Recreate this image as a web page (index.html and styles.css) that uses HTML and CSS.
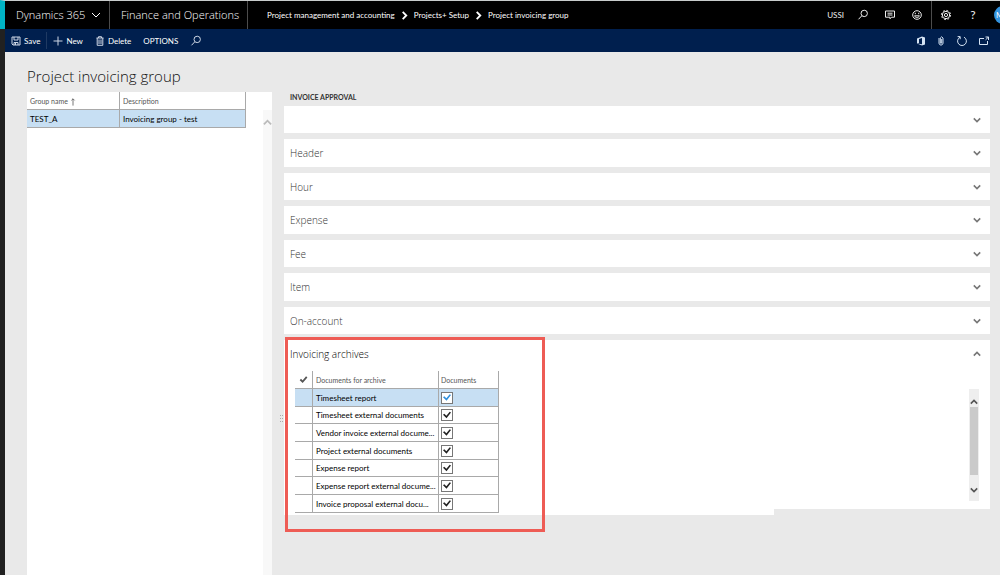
FILE: index.html
```html
<!DOCTYPE html>
<html lang="en">
<head>
<meta charset="utf-8">
<title>Project invoicing group</title>
<link rel="stylesheet" href="styles.css">
</head>
<body>
<svg class="sprite" aria-hidden="true">
  <symbol id="down" viewBox="0 0 10 10"><path d="M1 3l4 4 4-4"/></symbol>
  <symbol id="up" viewBox="0 0 10 10"><path d="M1 7l4-4 4 4"/></symbol>
  <symbol id="right" viewBox="0 0 10 10"><path d="M3 1l4 4-4 4"/></symbol>
  <symbol id="search" viewBox="0 0 12 12"><circle cx="7.2" cy="4.4" r="3.2"/><path d="M4.8 6.8L1.5 10.3"/></symbol>
  <symbol id="tick" viewBox="0 0 10 10"><path d="M1.5 5l2.500 2.500L8.600 2"/></symbol>
</svg>
<div class="app">
  <header class="topbar">
    <button class="brand">Dynamics 365 <svg class="icon i10"><use href="#down"/></svg></button>
    <div class="product">Finance and Operations</div>
    <nav class="crumbs">
      <a href="#">Project management and accounting</a>
      <svg class="icon i9"><use href="#right"/></svg>
      <a href="#">Projects+ Setup</a>
      <svg class="icon i9"><use href="#right"/></svg>
      <a href="#">Project invoicing group</a>
    </nav>
    <div class="top-tools">
      <button class="company">USSI</button>
      <button class="tool" aria-label="Search"><svg class="icon i12"><use href="#search"/></svg></button>
      <button class="tool" aria-label="Messages"><svg class="icon i12" viewBox="0 0 12 12"><path d="M1.5 2h9v6.200h-3L6 9.800V8.200H1.500z"/><path d="M3.500 4.200h5M3.500 6h5"/></svg></button>
      <button class="tool" aria-label="Feedback"><svg class="icon i12" viewBox="0 0 12 12"><circle cx="6" cy="6" r="4.300"/><path d="M3.500 6.800c.8 2.200 4.200 2.200 5 0zM4.300 3.800v1.400M7.700 3.800v1.400"/></svg></button>
    </div>
    <div class="user-tools">
      <button class="tool" aria-label="Settings"><svg class="icon i12" viewBox="0 0 12 12"><circle cx="6" cy="6" r="1.600"/><circle cx="6" cy="6" r="3.700"/><circle cx="6" cy="6" r="4.600" stroke-dasharray="1.800 1.800"/></svg></button>
      <button class="tool help" aria-label="Help">?</button>
      <button class="avatar">M</button>
    </div>
  </header>
  <div class="actions">
    <button class="action save"><svg class="icon i10" viewBox="0 0 10 10"><path d="M1 1h8v8H2L1 8z"/><path d="M3 1v3h4V1M3 9V6.500h4V9M4.500 7v2"/></svg>Save</button>
    <button class="action"><svg class="icon i10" viewBox="0 0 10 10"><path d="M5 .5v9M.5 5h9"/></svg>New</button>
    <button class="action"><svg class="icon i10" viewBox="0 0 10 10"><path d="M1.500 2h7M3.500 2V.7h3V2M2.200 2v7.300h5.600V2M4 3.500v4.500M6 3.500v4.500"/></svg>Delete</button>
    <button class="action">OPTIONS</button>
    <button class="action" aria-label="Find"><svg class="icon i12"><use href="#search"/></svg></button>
    <div class="page-tools">
      <button class="tool" aria-label="Office"><svg class="icon i10" viewBox="0 0 10 10"><path d="M1 2.500L6 .5l3 1v7l-3 1-5-2 5 .7V2L3 2.900v4L1 7.500z" fill="currentColor" stroke="none"/></svg></button>
      <button class="tool" aria-label="Attach"><svg class="icon i10" viewBox="0 0 10 10"><path d="M3 2v5.800q2 3 4 0V2Q5.500-.4 4.300 2v5q.7 1 1.400 0V3"/></svg></button>
      <button class="tool" aria-label="Refresh"><svg class="icon i12" viewBox="0 0 12 12"><path d="M4 2.200A4.400 4.400 0 1 0 8 2.200M1.600 1.600H4.200V4.200"/></svg></button>
      <button class="tool" aria-label="Open in new window"><svg class="icon i12" viewBox="0 0 12 12"><path d="M6 3.500H1.500v6h8V6M7.500 2h3v3M10.300 2.200L7.600 4.800"/></svg></button>
    </div>
  </div>
  <main class="page">
    <h1 class="title">Project invoicing group</h1>
    <div class="split">
      <section class="list">
        <table class="grid groups">
          <thead><tr><th class="c-name">Group name <svg class="icon sort" viewBox="0 0 6 10"><path d="M3 9.500V1M1 3l2-2 2 2"/></svg></th><th>Description</th></tr></thead>
          <tbody><tr class="selected"><td>TEST_A</td><td>Invoicing group - test</td></tr></tbody>
        </table>
        <div class="list-scroll"><svg class="icon i9"><use href="#up"/></svg></div>
      </section>
      <div class="grip"><i></i><i></i><i></i><i></i><i></i><i></i></div>
      <div class="detail">
        <h2 class="caption">INVOICE APPROVAL</h2>
        <div class="tabs">
          <button class="tab" aria-label="General"><span></span><svg class="icon i8"><use href="#down"/></svg></button>
          <button class="tab"><span>Header</span><svg class="icon i8"><use href="#down"/></svg></button>
          <button class="tab"><span>Hour</span><svg class="icon i8"><use href="#down"/></svg></button>
          <button class="tab"><span>Expense</span><svg class="icon i8"><use href="#down"/></svg></button>
          <button class="tab"><span>Fee</span><svg class="icon i8"><use href="#down"/></svg></button>
          <button class="tab"><span>Item</span><svg class="icon i8"><use href="#down"/></svg></button>
          <button class="tab"><span>On-account</span><svg class="icon i8"><use href="#down"/></svg></button>
          <section class="archive">
            <button class="tab open"><span>Invoicing archives</span><svg class="icon i8"><use href="#up"/></svg></button>
            <div class="archive-body">
              <table class="grid docs">
                <thead><tr><th class="c-mark"><svg class="icon i9"><use href="#tick"/></svg></th><th class="c-doc">Documents for archive</th><th class="c-check">Documents</th></tr></thead>
                <tbody>
                  <tr class="selected"><td></td><td id="d1">Timesheet report</td><td class="c-check"><input type="checkbox" class="check" aria-labelledby="d1" checked></td></tr>
                  <tr><td></td><td id="d2">Timesheet external documents</td><td class="c-check"><input type="checkbox" class="check" aria-labelledby="d2" checked></td></tr>
                  <tr><td></td><td id="d3">Vendor invoice external docume...</td><td class="c-check"><input type="checkbox" class="check" aria-labelledby="d3" checked></td></tr>
                  <tr><td></td><td id="d4">Project external documents</td><td class="c-check"><input type="checkbox" class="check" aria-labelledby="d4" checked></td></tr>
                  <tr><td></td><td id="d5">Expense report</td><td class="c-check"><input type="checkbox" class="check" aria-labelledby="d5" checked></td></tr>
                  <tr><td></td><td id="d6">Expense report external docume...</td><td class="c-check"><input type="checkbox" class="check" aria-labelledby="d6" checked></td></tr>
                  <tr><td></td><td id="d7">Invoice proposal external docu...</td><td class="c-check"><input type="checkbox" class="check" aria-labelledby="d7" checked></td></tr>
                </tbody>
              </table>
              <div class="scrollbar"><svg class="icon i8"><use href="#up"/></svg><div class="thumb"></div><svg class="icon i8"><use href="#down"/></svg></div>
            </div>
            <div class="highlight"></div>
          </section>
        </div>
      </div>
    </div>
  </main>
</div>
</body>
</html>
```

FILE: styles.css
```css
* { box-sizing: border-box; }
body {
  margin: 0;
  background: #e9e9e9;
  color: #000;
  font: 8px/12px Lato, "Open Sans", sans-serif;
}
button {
  margin: 0; padding: 0; border: 0; background: none;
  color: inherit; font: inherit; text-align: left;
  display: flex; align-items: center;
}
a { color: inherit; text-decoration: none; }
h1, h2 { margin: 0; }

.sprite { display: none; }
.icon { fill: none; stroke: currentColor; stroke-width: 1; flex: none; display: block; }
.i8 { width: 8px; height: 8px; stroke-width: 2; }
.i9 { width: 9px; height: 9px; stroke-width: 2; }
.i10 { width: 10px; height: 10px; }
.i12 { width: 12px; height: 12px; }

.app {
  min-height: 100vh;
  display: flex; flex-direction: column;
  border-left: 5px solid #212121;
}

.topbar {
  display: flex; align-items: stretch;
  height: 29px;
  margin-left: -5px;
  border-top: 1px solid #c8cccc;
  border-left: 5px solid #00b4c5;
  background: #000; color: #eee;
  overflow: hidden;
}
.brand, .product { font-family: "Open Sans", sans-serif; font-size: 11px; font-weight: 300; color: #fff; border-right: 1px solid #4c4c4c; }
.brand { gap: 6px; width: 105px; padding-left: 11px; }
.product { display: flex; align-items: center; width: 138px; padding-left: 11px; }
.crumbs { flex: 1; display: flex; align-items: center; gap: 5px; padding-left: 19px; color: #fff; }
.top-tools { display: flex; align-items: center; gap: 15px; padding-right: 8px; border-right: 1px solid #4c4c4c; }
.user-tools { display: flex; align-items: center; gap: 15px; padding-left: 8px; margin-right: -12px; }
.company { margin-right: -2px; }
.help { width: 12px; justify-content: center; font-size: 12px; }
.avatar { width: 18px; height: 18px; padding-left: 2px; border-radius: 50%; background: #3393df; color: #fff; }

.actions {
  display: flex; align-items: center;
  height: 23px;
  padding: 0 10px 0 6px;
  background: #001f4e; color: #fff;
}
.action { gap: 3px; margin-right: 12px; }
.action .icon { color: #cdd6e4; }
.save { height: 17px; margin-right: 6px; padding-right: 6px; border-right: 1px solid #1f3a63; }
.page-tools { flex: 1; display: flex; justify-content: flex-end; gap: 10px; color: #d5e3f3; }

.page { flex: 1; display: flex; flex-direction: column; padding: 14px 10px 0 22px; }
.title { font: 300 15px/20px "Open Sans", sans-serif; color: #111; }
.split { flex: 1; display: flex; margin-top: 6px; }

.list { flex: none; width: 245px; display: flex; justify-content: space-between; align-items: stretch; background: #fff; }
.list-scroll { width: 9px; margin-top: 18px; padding-top: 8px; background: #f8f8f8; color: #bbb; }

.grid { border-collapse: separate; border-spacing: 0; table-layout: fixed; align-self: flex-start; }
.grid th, .grid td {
  height: 18px; padding: 0 0 0 3px;
  border-right: 1px solid #a9a9a9; border-bottom: 1px solid #a9a9a9;
  text-align: left; vertical-align: middle; white-space: nowrap; line-height: 12px;
}
.grid th { font-size: 7px; font-weight: 400; color: #555; }
.selected td { background: #c7dff3; }
.groups { width: 219px; }
.c-name { width: 93px; }
.sort { display: inline-block; width: 6px; height: 8px; vertical-align: middle; }

.grip { width: 12px; display: grid; grid-template-columns: 1px 1px; gap: 2px 1px; place-content: center end; padding: 170px 1px 0 0; }
.grip i { width: 1px; height: 1px; background: #aaa; }

.detail { flex: 1; min-width: 0; }
.caption { padding: 0 0 5px 6px; height: 14px; font-size: 7px; line-height: 10px; font-weight: 700; color: #333; }
.tabs { display: flex; flex-direction: column; gap: 6px; }
.tab {
  width: 100%; height: 28px; padding: 0 9px 0 6px;
  justify-content: space-between;
  background: #fff; color: #333;
  font: 300 10px/14px "Open Sans", sans-serif;
}
.tab:nth-child(odd) { height: 27px; }
.tab .icon { color: #777; }
.tab.open { color: #000; }

.archive { position: relative; background: #fff; padding-bottom: 8px; }
.archive::after { content: ""; position: absolute; left: 0; top: 100%; width: 490px; height: 6px; background: #fff; }
.archive-body { display: flex; justify-content: space-between; height: 134px; padding: 4px 11px 0 11px; }
.docs { flex: none; width: 204px; }
.docs .c-mark { width: 18px; padding-left: 4px; }
.c-doc { width: 126px; }
.docs .c-check { padding-left: 2px; }
.docs td { position: relative; z-index: 1; }
.docs tr:nth-child(3n+2) td { height: 17px; }

.check {
  appearance: none; display: block;
  width: 12px; height: 12px; margin: 0;
  border: 1px solid #777; background: #fff; color: #222;
}
.check:checked::before {
  content: ""; display: block;
  width: 8px; height: 8px; margin: 1px;
  background: currentColor;
  clip-path: polygon(0 48%, 16% 34%, 42% 60%, 84% 8%, 100% 20%, 44% 90%);
}
.selected .check { color: #2f8fdd; }

.scrollbar { display: flex; flex-direction: column; align-items: center; gap: 1px; width: 10px; height: 112px; margin-top: 18px; padding-top: 9px; background: #eee; color: #555; }
.thumb { width: 8px; height: 68px; margin-bottom: 10px; background: #cacaca; }

.highlight { position: absolute; z-index: 2; left: 1px; top: -3px; width: 260px; height: 195px; border: 3px solid #ee5c55; }
```
